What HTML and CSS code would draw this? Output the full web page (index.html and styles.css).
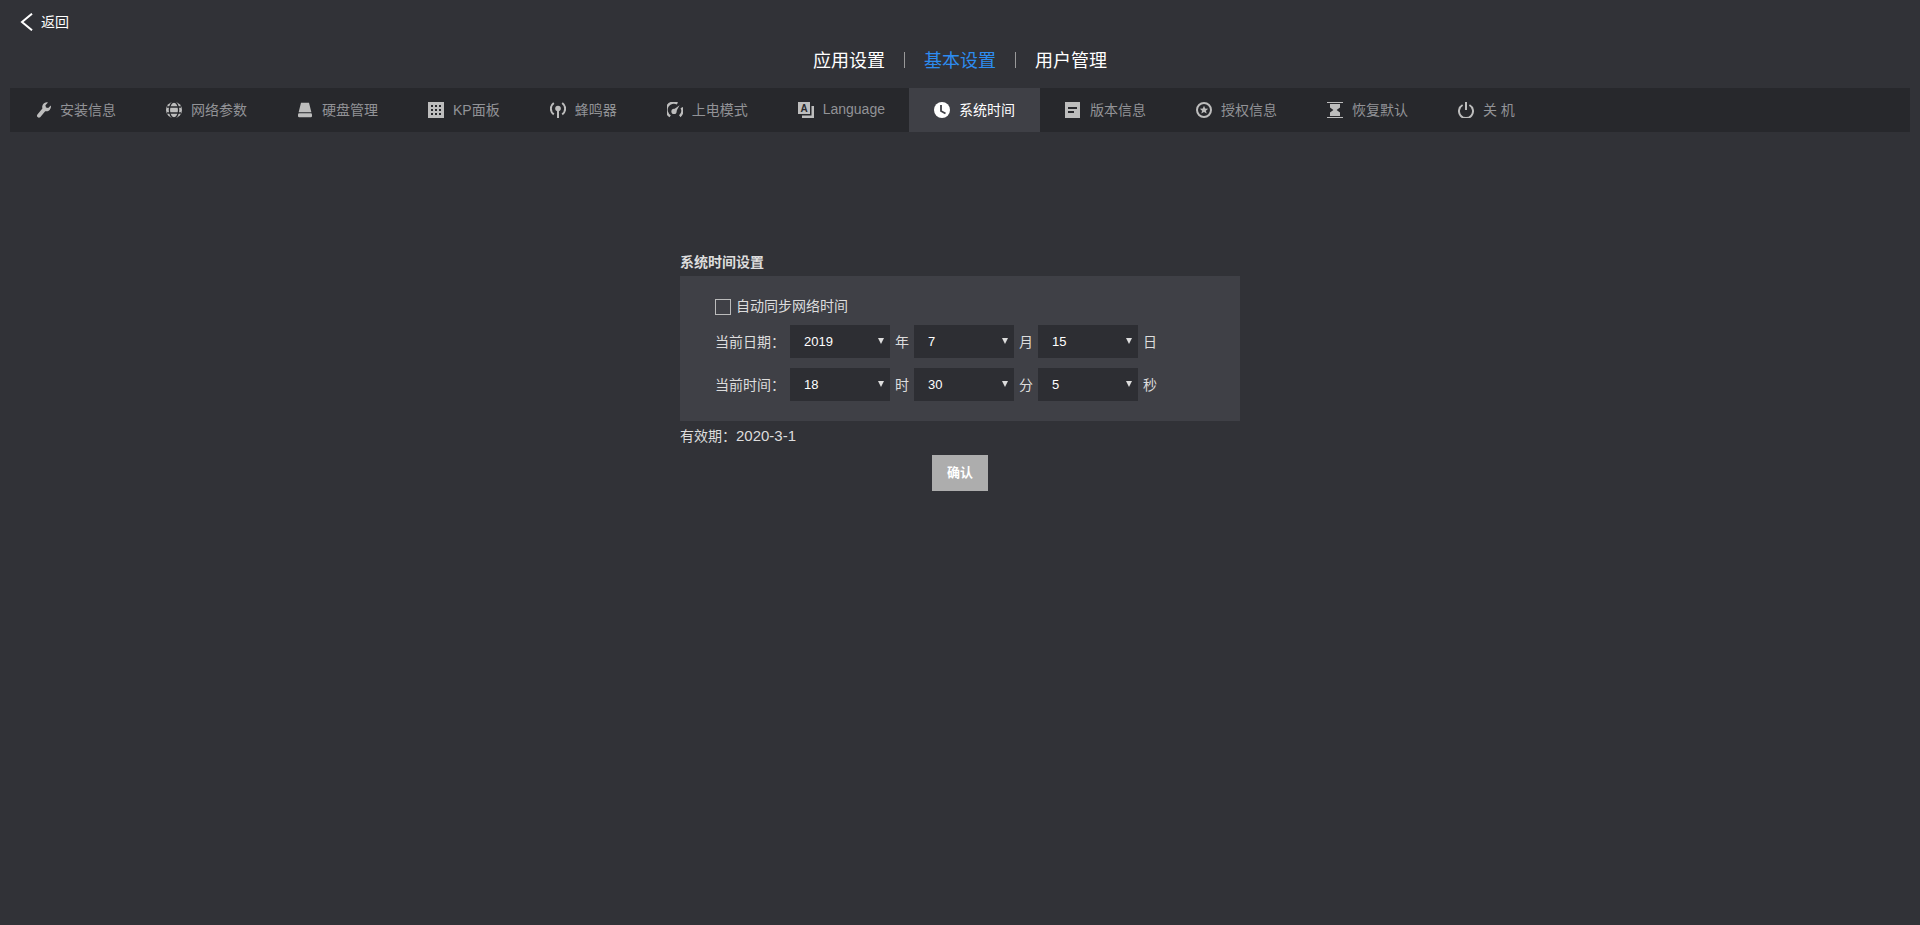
FILE: index.html
```html
<!DOCTYPE html>
<html>
<head>
    <meta charset="utf-8">
    <title>系统时间</title>
    <link rel="stylesheet" href="styles.css">
</head>
<body>
    <div class="back">
        <svg class="back-icon" width="13" height="18" viewBox="0 0 13 18"><path d="M12 .7 L2 9 L12 17.3" fill="none" stroke="currentColor" stroke-width="2"/></svg>
        <span class="back-text">返回</span>
    </div>

    <div class="top-nav">
        <span>应用设置</span>
        <i class="sep"></i>
        <span class="on">基本设置</span>
        <i class="sep"></i>
        <span>用户管理</span>
    </div>

    <div class="tabs">
        <div class="tab">
            <svg class="icon" viewBox="0 0 16 16"><path d="M15.8 3.4 L13.2 6 L11 5.4 L10.4 3.2 L13 .5 A4.7 4.7 0 0 0 7.4 6.4 L2.4 12.4 A2 2 0 0 0 5.2 15.2 L10.2 9.2 A4.7 4.7 0 0 0 15.8 3.4 Z"/></svg>
            <span>安装信息</span>
        </div>
        <div class="tab">
            <svg class="icon" viewBox="0 0 16 16"><circle cx="8" cy="8" r="8"/><g class="cut"><ellipse cx="8" cy="8" rx="4.6" ry="8"/><path d="M1 5 H15 M1 11 H15"/></g></svg>
            <span>网络参数</span>
        </div>
        <div class="tab">
            <svg class="icon" viewBox="0 0 16 16"><path d="M4 .8 H12 L14.4 10.2 H1.6 Z"/><rect x="1" y="11.2" width="14" height="4" rx="1.2"/></svg>
            <span>硬盘管理</span>
        </div>
        <div class="tab">
            <svg class="icon" viewBox="0 0 16 16"><rect width="16" height="16"/><g class="dots"><rect x="3" y="3" width="2" height="2"/><rect x="7" y="3" width="2" height="2"/><rect x="11" y="3" width="2" height="2"/><rect x="3" y="7" width="2" height="2"/><rect x="7" y="7" width="2" height="2"/><rect x="11" y="7" width="2" height="2"/><rect x="3" y="11" width="2" height="2"/><rect x="7" y="11" width="2" height="2"/><rect x="11" y="11" width="2" height="2"/></g></svg>
            <span>KP面板</span>
        </div>
        <div class="tab">
            <svg class="icon" viewBox="0 0 16 16"><circle cx="8" cy="6.5" r="2.8"/><rect x="7" y="7" width="2" height="9"/><g class="line"><path d="M3.8 12.4 A7 7 0 0 1 3.8 1"/><path d="M12.2 12.4 A7 7 0 0 0 12.2 1"/></g></svg>
            <span>蜂鸣器</span>
        </div>
        <div class="tab">
            <svg class="icon" viewBox="0 0 16 16"><g class="line line-wide"><path d="M3.2 14.2 A7 7 0 0 1 10.4 1.5"/><path d="M14.6 5.6 A7 7 0 0 1 12.8 14.2"/></g><circle cx="7" cy="9.4" r="2.6"/><path d="M6 8 L12.6 3.2 L8.6 10.4 Z"/></svg>
            <span>上电模式</span>
        </div>
        <div class="tab">
            <svg class="icon" viewBox="0 0 16 16"><rect width="12" height="12"/><text class="icon-letter" x="6" y="10">A</text><path d="M13.5 4 H16 V16 H4 V13.5 H13.5 Z"/></svg>
            <span>Language</span>
        </div>
        <div class="tab active">
            <svg class="icon" viewBox="0 0 16 16"><circle cx="8" cy="8" r="8"/><path class="cut cut-hand" d="M7 3 V9 L11.5 11.5"/></svg>
            <span>系统时间</span>
        </div>
        <div class="tab">
            <svg class="icon" viewBox="0 0 16 16"><rect width="15" height="16"/><g class="dots"><rect x="3" y="5" width="9" height="2"/><rect x="3" y="9" width="6" height="2"/></g></svg>
            <span>版本信息</span>
        </div>
        <div class="tab">
            <svg class="icon" viewBox="0 0 16 16"><circle class="line" cx="8" cy="8" r="7"/><path d="M8 3.8 L9.2 6.6 L12.2 6.8 L9.9 8.7 L10.7 11.6 L8 10 L5.3 11.6 L6.1 8.7 L3.8 6.8 L6.8 6.6 Z"/></svg>
            <span>授权信息</span>
        </div>
        <div class="tab">
            <svg class="icon" viewBox="0 0 16 16"><rect y="0" width="16" height="1"/><rect y="15" width="16" height="1"/><path d="M3 2 H13 V5.5 L9.6 8 L13 10.5 V14 H3 V10.5 L6.4 8 L3 5.5 Z"/></svg>
            <span>恢复默认</span>
        </div>
        <div class="tab">
            <svg class="icon" viewBox="0 0 16 16"><g class="line"><path d="M4.6 3 A7 7 0 1 0 11.4 3"/><path d="M8 0 V8"/></g></svg>
            <span>关 机</span>
        </div>
    </div>

    <div class="content">
        <div class="title">系统时间设置</div>
        <div class="panel">
            <label class="check-row">
                <input type="checkbox">
                <span class="text-up">自动同步网络时间</span>
            </label>
            <div class="row">
                <span class="label">当前日期：</span>
                <div class="sel"><select><option>2019</option></select></div>
                <span class="unit">年</span>
                <div class="sel"><select><option>7</option></select></div>
                <span class="unit">月</span>
                <div class="sel"><select><option>15</option></select></div>
                <span class="unit">日</span>
            </div>
            <div class="row">
                <span class="label">当前时间：</span>
                <div class="sel"><select><option>18</option></select></div>
                <span class="unit">时</span>
                <div class="sel"><select><option>30</option></select></div>
                <span class="unit">分</span>
                <div class="sel"><select><option>5</option></select></div>
                <span class="unit">秒</span>
            </div>
        </div>
        <div class="expire">有效期：<span class="expire-date">2020-3-1</span></div>
        <button class="confirm" type="button">确认</button>
    </div>
</body>
</html>
```

FILE: styles.css
```css
body {
    font-family: "Liberation Sans", "Noto Sans CJK SC", sans-serif;
    font-size: 14px;
    background-color: #313237;
    color: #ddd;
    margin: 0;
    padding: 0;
}
.back {
    display: flex;
    align-items: center;
    height: 18px;
    padding: 13px 0 0 20px;
    color: #fff;
}
.back-icon {
    margin-right: 8px;
}
.back-text {
    margin-bottom: 2px;
}
.top-nav {
    display: flex;
    justify-content: center;
    align-items: center;
    height: 30px;
    margin-top: 13px;
    font-size: 18px;
    color: #fff;
}
.top-nav .on {
    color: #2d8cf0;
}
.sep {
    width: 1px;
    height: 16px;
    margin: 2px 19px 0;
    background-color: #999;
}
.tabs {
    display: flex;
    height: 44px;
    margin: 14px 10px 0;
    background-color: #27282c;
}
.tab {
    display: flex;
    align-items: center;
    padding: 0 25px;
    color: #929397;
    white-space: nowrap;
}
.tab span {
    margin-bottom: 2px;
}
.tab.active {
    margin-left: -1px;
    background-color: #3f4046;
    color: #fff;
}
.icon {
    width: 16px;
    height: 16px;
    margin-right: 9px;
    fill: #bdbdbd;
}
.active .icon {
    fill: #fff;
}
.icon .cut {
    fill: none;
    stroke: #27282c;
    stroke-width: 1.3;
}
.icon .cut-hand {
    stroke: #3f4046;
    stroke-width: 1.8;
}
.icon .dots {
    fill: #27282c;
}
.icon .line {
    fill: none;
    stroke: #bdbdbd;
    stroke-width: 2;
}
.icon .line-wide {
    stroke-width: 2.4;
}
.icon-letter {
    font-family: "Liberation Sans", sans-serif;
    font-size: 10px;
    font-weight: bold;
    text-anchor: middle;
    fill: #27282c;
}
.content {
    width: 560px;
    margin: 120px auto 0;
}
.title {
    height: 24px;
    line-height: 20px;
    font-weight: bold;
}
.panel {
    padding: 23px 0 20px 35px;
    background-color: #3f4046;
}
.check-row {
    display: flex;
    align-items: center;
    height: 16px;
    margin-bottom: 10px;
}
.check-row input {
    appearance: none;
    box-sizing: border-box;
    width: 16px;
    height: 16px;
    margin: 0 5px 0 0;
    border: 1px solid #bbb;
    background: none;
}
.text-up {
    margin-bottom: 4px;
}
.row {
    display: flex;
    align-items: center;
    height: 33px;
    margin-bottom: 10px;
}
.row:last-child {
    margin-bottom: 0;
}
.label {
    width: 75px;
    margin-bottom: 2px;
}
.sel {
    position: relative;
    width: 100px;
    height: 33px;
}
.sel::after {
    content: "";
    position: absolute;
    top: 13px;
    right: 6px;
    border-top: 6px solid #ddd;
    border-left: 3px solid transparent;
    border-right: 3px solid transparent;
}
.sel select {
    appearance: none;
    display: block;
    width: 100%;
    height: 100%;
    padding: 0 0 0 14px;
    border: none;
    border-radius: 0;
    background-color: #2d2e33;
    color: #fff;
    font-family: inherit;
    font-size: 13px;
}
.unit {
    width: 24px;
    margin-bottom: 2px;
    text-align: center;
}
.expire {
    height: 30px;
    line-height: 30px;
}
.expire-date {
    font-size: 15px;
}
.confirm {
    display: block;
    width: 56px;
    height: 36px;
    margin: 4px auto 0;
    padding: 0 0 4px;
    border: none;
    background-color: #adadad;
    color: #fff;
    font-family: inherit;
    font-size: 13px;
    font-weight: bold;
}
```
